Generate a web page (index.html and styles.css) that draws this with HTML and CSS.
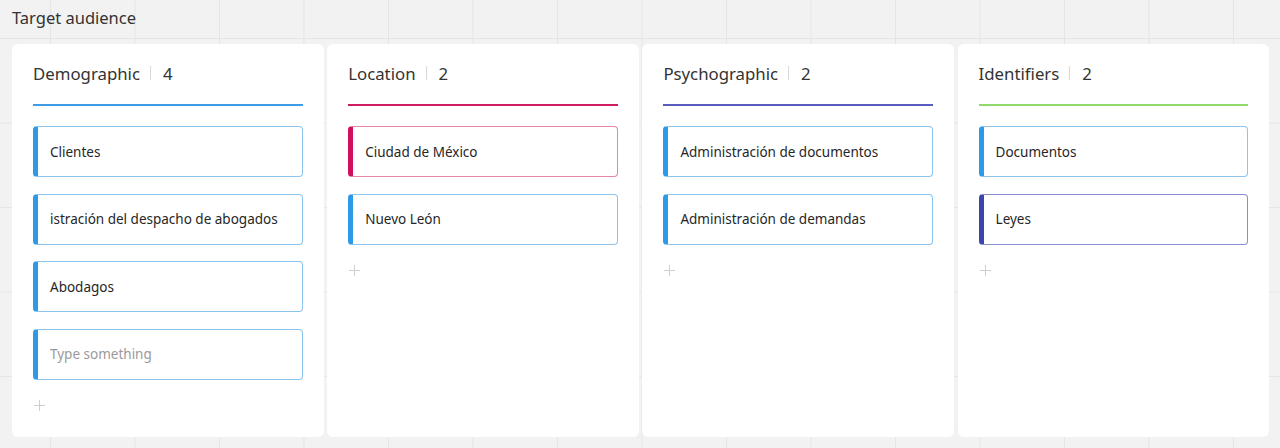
FILE: index.html
```html
<!DOCTYPE html>
<html>
<head>
<meta charset="utf-8">
<link rel="stylesheet" href="styles.css">
</head>
<body>
<div class="board">
  <h1 class="title">Target audience</h1>
  <div class="columns">
    <section class="col">
      <header class="col-head head-blue">
        <span class="col-name">Demographic</span><span class="sep"></span><span class="count">4</span>
      </header>
      <div class="item bar-blue"><span>Clientes</span></div>
      <div class="item bar-blue"><span>istración del despacho de abogados</span></div>
      <div class="item bar-blue"><span>Abodagos</span></div>
      <div class="item bar-blue"><span class="placeholder">Type something</span></div>
      <div class="add"></div>
    </section>
    <section class="col">
      <header class="col-head head-pink">
        <span class="col-name">Location</span><span class="sep"></span><span class="count">2</span>
      </header>
      <div class="item bar-pink"><span>Ciudad de México</span></div>
      <div class="item bar-blue"><span>Nuevo León</span></div>
      <div class="add"></div>
    </section>
    <section class="col">
      <header class="col-head head-indigo">
        <span class="col-name">Psychographic</span><span class="sep"></span><span class="count">2</span>
      </header>
      <div class="item bar-blue"><span>Administración de documentos</span></div>
      <div class="item bar-blue"><span>Administración de demandas</span></div>
      <div class="add"></div>
    </section>
    <section class="col">
      <header class="col-head head-green">
        <span class="col-name">Identifiers</span><span class="sep"></span><span class="count">2</span>
      </header>
      <div class="item bar-blue"><span>Documentos</span></div>
      <div class="item bar-indigo"><span>Leyes</span></div>
      <div class="add"></div>
    </section>
  </div>
</div>
</body>
</html>
```

FILE: styles.css
```css
html, body {
  margin: 0;
  padding: 0;
  height: 100%;
}
body {
  font-family: "Noto Sans", "Open Sans", sans-serif;
  color: #333;
  background-color: #f2f2f2;
  background-image:
    linear-gradient(to right, #e5e5e5 1px, transparent 1px),
    linear-gradient(to bottom, #e5e5e5 1px, transparent 1px);
  background-size: 84.5px 84.5px;
  background-position: 50px 38px;
  overflow: hidden;
}
.board {
  padding: 6px 10px 0 12px;
}
.title {
  margin: 0;
  font-size: 16.5px;
  font-weight: 400;
  line-height: 24px;
  color: #333;
}
.columns {
  margin-top: 14px;
  display: grid;
  grid-template-columns: repeat(4, 311.5px);
  column-gap: 3.7px;
}
.col {
  background: #fff;
  border-radius: 6px;
  height: 393px;
  padding: 17px 21px 0 21px;
  box-sizing: border-box;
}
.col-head {
  display: flex;
  align-items: center;
  height: 24px;
  padding-bottom: 19px;
  border-bottom: 2px solid;
  margin-bottom: 20px;
  font-size: 16.8px;
  color: #333;
}
.sep {
  width: 1px;
  height: 14px;
  background: #d9d9d9;
  margin: 0 12px 0 10px;
}
.head-blue { border-color: #3f9be6; }
.head-pink { border-color: #d21a62; }
.head-indigo { border-color: #5a5cbd; }
.head-green { border-color: #8ed96a; }
.item {
  height: 51px;
  box-sizing: border-box;
  border: 1px solid #8cc4f0;
  border-left: 5px solid #2c9ae6;
  border-radius: 4px;
  display: flex;
  align-items: center;
  padding-left: 12px;
  margin-bottom: 16.5px;
  font-size: 13.5px;
  color: #262626;
}
.bar-pink {
  border-color: #e586ab;
  border-left-color: #d0105c;
}
.bar-indigo {
  border-color: #8a8dd0;
  border-left-color: #3d44ad;
}
.placeholder {
  color: #9a9a9a;
}
.add {
  position: relative;
  width: 11px;
  height: 11px;
  margin: 20.5px 0 0 1px;
}
.add::before,
.add::after {
  content: "";
  position: absolute;
  background: #cfcfcf;
}
.add::before {
  left: 0;
  right: 0;
  top: 5px;
  height: 1px;
}
.add::after {
  top: 0;
  bottom: 0;
  left: 5px;
  width: 1px;
}
```
